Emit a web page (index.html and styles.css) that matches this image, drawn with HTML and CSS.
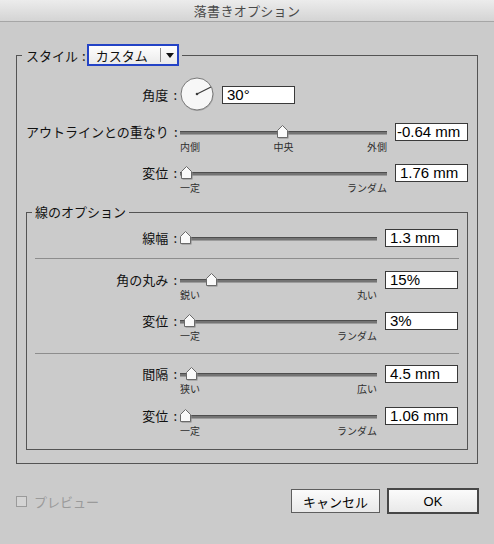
FILE: index.html
```html
<!DOCTYPE html>
<html lang="ja">
<head>
<meta charset="utf-8">
<title>落書きオプション</title>
<link rel="stylesheet" href="styles.css">
</head>
<body>
<div class="window">
  <div class="titlebar">落書きオプション</div>
  <div class="content">
    <div class="group outer">
      <div class="legend outer-legend">
        <span class="legend-text">スタイル<span class="colon">:</span></span>
        <div class="select">
          <span class="sel-text">カスタム</span>
          <span class="sel-sep"></span>
          <span class="sel-arrow"></span>
        </div>
      </div>

      <div class="dial-row">
        <div class="label">角度<span class="colon">:</span></div>
        <div class="dial-wrap">
          <svg class="dial" width="35" height="35" viewBox="0 0 35 35">
            <circle cx="17.5" cy="18" r="16" fill="#a9a9a9"/>
            <circle cx="17" cy="17" r="16" fill="#f7f7f7" stroke="#787878" stroke-width="1"/>
            <line x1="17" y1="17" x2="31" y2="10" stroke="#3c3c3c" stroke-width="1.2"/>
            <circle cx="17" cy="17" r="1.3" fill="#3c3c3c"/>
          </svg>
          <div class="field">30°</div>
        </div>
      </div>

      <div class="row orow r-outline">
        <div class="label">アウトラインとの重なり<span class="colon">:</span></div>
        <div class="slider oslider">
          <div class="track"></div>
          <svg class="thumb" style="left:97px" width="13" height="14" viewBox="0 0 13 14"><path d="M1.5 6.5 L6.5 1.5 L11.5 6.5 V13.5 H1.5Z" fill="#8a8a8a"/><path d="M0.5 5.5 L5.5 0.5 L10.5 5.5 V12.5 H0.5Z" fill="#fafafa" stroke="#6a6a6a"/></svg>
        </div>
        <div class="field tight">-0.64 mm</div>
      </div>
      <div class="row orow sub-row">
        <div></div>
        <div class="sub osub"><span>内側</span><span>中央</span><span>外側</span></div>
      </div>

      <div class="row orow r-gap">
        <div class="label">変位<span class="colon">:</span></div>
        <div class="slider oslider">
          <div class="track"></div>
          <svg class="thumb" style="left:1px" width="13" height="14" viewBox="0 0 13 14"><path d="M1.5 6.5 L6.5 1.5 L11.5 6.5 V13.5 H1.5Z" fill="#8a8a8a"/><path d="M0.5 5.5 L5.5 0.5 L10.5 5.5 V12.5 H0.5Z" fill="#fafafa" stroke="#6a6a6a"/></svg>
        </div>
        <div class="field">1.76 mm</div>
      </div>
      <div class="row orow sub-row">
        <div></div>
        <div class="sub osub"><span>一定</span><span>ランダム</span></div>
      </div>

      <div class="group inner">
        <div class="legend inner-legend">線のオプション</div>

        <div class="row irow r-first">
          <div class="label">線幅<span class="colon">:</span></div>
          <div class="slider islider">
            <div class="track"></div>
            <svg class="thumb" style="left:0px" width="13" height="14" viewBox="0 0 13 14"><path d="M1.5 6.5 L6.5 1.5 L11.5 6.5 V13.5 H1.5Z" fill="#8a8a8a"/><path d="M0.5 5.5 L5.5 0.5 L10.5 5.5 V12.5 H0.5Z" fill="#fafafa" stroke="#6a6a6a"/></svg>
          </div>
          <div class="field">1.3 mm</div>
        </div>

        <div class="sep"></div>

        <div class="row irow r-after-sep">
          <div class="label">角の丸み<span class="colon">:</span></div>
          <div class="slider islider">
            <div class="track"></div>
            <svg class="thumb" style="left:26px" width="13" height="14" viewBox="0 0 13 14"><path d="M1.5 6.5 L6.5 1.5 L11.5 6.5 V13.5 H1.5Z" fill="#8a8a8a"/><path d="M0.5 5.5 L5.5 0.5 L10.5 5.5 V12.5 H0.5Z" fill="#fafafa" stroke="#6a6a6a"/></svg>
          </div>
          <div class="field">15%</div>
        </div>
        <div class="row irow sub-row">
          <div></div>
          <div class="sub isub"><span>鋭い</span><span>丸い</span></div>
        </div>

        <div class="row irow r-gap">
          <div class="label">変位<span class="colon">:</span></div>
          <div class="slider islider">
            <div class="track"></div>
            <svg class="thumb" style="left:4px" width="13" height="14" viewBox="0 0 13 14"><path d="M1.5 6.5 L6.5 1.5 L11.5 6.5 V13.5 H1.5Z" fill="#8a8a8a"/><path d="M0.5 5.5 L5.5 0.5 L10.5 5.5 V12.5 H0.5Z" fill="#fafafa" stroke="#6a6a6a"/></svg>
          </div>
          <div class="field">3%</div>
        </div>
        <div class="row irow sub-row">
          <div></div>
          <div class="sub isub"><span>一定</span><span>ランダム</span></div>
        </div>

        <div class="sep"></div>

        <div class="row irow r-gap">
          <div class="label">間隔<span class="colon">:</span></div>
          <div class="slider islider">
            <div class="track"></div>
            <svg class="thumb" style="left:6px" width="13" height="14" viewBox="0 0 13 14"><path d="M1.5 6.5 L6.5 1.5 L11.5 6.5 V13.5 H1.5Z" fill="#8a8a8a"/><path d="M0.5 5.5 L5.5 0.5 L10.5 5.5 V12.5 H0.5Z" fill="#fafafa" stroke="#6a6a6a"/></svg>
          </div>
          <div class="field">4.5 mm</div>
        </div>
        <div class="row irow sub-row">
          <div></div>
          <div class="sub isub"><span>狭い</span><span>広い</span></div>
        </div>

        <div class="row irow r-after-sep">
          <div class="label">変位<span class="colon">:</span></div>
          <div class="slider islider">
            <div class="track"></div>
            <svg class="thumb" style="left:0px" width="13" height="14" viewBox="0 0 13 14"><path d="M1.5 6.5 L6.5 1.5 L11.5 6.5 V13.5 H1.5Z" fill="#8a8a8a"/><path d="M0.5 5.5 L5.5 0.5 L10.5 5.5 V12.5 H0.5Z" fill="#fafafa" stroke="#6a6a6a"/></svg>
          </div>
          <div class="field">1.06 mm</div>
        </div>
        <div class="row irow sub-row">
          <div></div>
          <div class="sub isub"><span>一定</span><span>ランダム</span></div>
        </div>
      </div>
    </div>

    <div class="bottom">
      <div class="preview"><span class="checkbox"></span><span>プレビュー</span></div>
      <div class="btn cancel">キャンセル</div>
      <div class="btn ok">OK</div>
    </div>
  </div>
</div>
</body>
</html>
```

FILE: styles.css
```css
html, body {
  margin: 0;
  padding: 0;
  background: #cbcbcb;
}

body {
  font-family: "Noto Sans CJK JP", "Noto Sans", sans-serif;
  font-size: 13px;
  color: #111;
}

.window {
  width: 494px;
  height: 544px;
  overflow: hidden;
  background: #cbcbcb;
}

.titlebar {
  height: 21px;
  line-height: 21px;
  border-bottom: 1px solid #a6a6a6;
  background: linear-gradient(#ececec, #d4d4d4);
  text-align: center;
  color: #4a4a4a;
  font-size: 13px;
  letter-spacing: 0.3px;
}

.content {
  padding: 0 15px 0 16px;
}

.group {
  border: 1px solid #545454;
  box-sizing: border-box;
}

.outer {
  width: 462px;
  margin-top: 33px;
  padding: 0 9px 13px 9px;
}

.inner {
  width: 442px;
  margin-top: 18px;
  padding: 0 0 12px 0;
}

.legend {
  width: max-content;
  background: #cbcbcb;
}

.outer-legend {
  display: flex;
  align-items: center;
  height: 22px;
  margin: -12px 0 0 -4px;
  padding: 0 3px 0 4px;
  gap: 1px;
}

.outer-legend .colon {
  margin-left: 4px;
}

.inner-legend {
  height: 16px;
  line-height: 16px;
  margin: -9px 0 0 5px;
  padding: 0 3px;
}

.colon {
  margin-left: 5px;
}

.select {
  display: flex;
  align-items: center;
  width: 92px;
  height: 22px;
  box-sizing: border-box;
  border: 2px solid #2343c6;
  background: linear-gradient(#fefefe, #eaeaea);
  padding-left: 7px;
}

.sel-text {
  width: 64px;
}

.sel-sep {
  width: 1px;
  height: 14px;
  background: #8c8c8c;
}

.sel-arrow {
  width: 0;
  height: 0;
  margin-left: 5px;
  border-left: 4px solid transparent;
  border-right: 4px solid transparent;
  border-top: 5px solid #111;
}

.label {
  text-align: right;
  padding-right: 3px;
  line-height: 18px;
  white-space: nowrap;
}

.dial-row {
  display: grid;
  grid-template-columns: 154px auto;
  align-items: center;
  margin-top: 11px;
  height: 34px;
}

.dial-wrap {
  display: flex;
  align-items: center;
  gap: 7px;
}

.dial {
  display: block;
}

.row {
  display: grid;
  align-items: start;
}

.orow {
  grid-template-columns: 154px 215px 73px;
}

.irow {
  grid-template-columns: 153px 205px 73px;
}

.r-outline {
  margin-top: 12px;
}

.r-gap {
  margin-top: 11px;
}

.r-first {
  margin-top: 9px;
}

.r-after-sep {
  margin-top: 12px;
}

.field {
  width: 73px;
  height: 18px;
  box-sizing: border-box;
  border: 1px solid #3a3a3a;
  background: #fff;
  font-family: "Liberation Sans", Arial, sans-serif;
  font-size: 15px;
  line-height: 16px;
  padding-left: 4px;
  color: #000;
  white-space: nowrap;
  overflow: hidden;
}

.field.tight {
  padding-left: 1px;
}

.slider {
  position: relative;
  height: 18px;
  padding-top: 8px;
  box-sizing: border-box;
}

.oslider {
  width: 207px;
}

.islider {
  width: 197px;
}

.track {
  height: 4px;
  box-sizing: border-box;
  background: #747474;
  border-top: 1px solid #4e4e4e;
  border-bottom: 1px solid #9c9c9c;
}

.thumb {
  position: absolute;
  top: 2px;
  display: block;
}

.sub-row {
  height: 12px;
}

.sub {
  display: flex;
  justify-content: space-between;
  font-size: 10px;
  line-height: 12px;
  color: #2e2e2e;
}

.osub {
  width: 207px;
}

.isub {
  width: 197px;
}

.sep {
  height: 1px;
  margin: 11px 8px 0 8px;
  background: #8d8d8d;
}

.bottom {
  display: flex;
  align-items: center;
  margin-top: 24px;
  height: 26px;
}

.preview {
  display: flex;
  align-items: center;
  gap: 7px;
  color: #9a9a9a;
}

.checkbox {
  width: 11px;
  height: 11px;
  box-sizing: border-box;
  border: 1px solid #9a9a9a;
  background: #d4d4d4;
}

.btn {
  display: flex;
  align-items: center;
  justify-content: center;
  box-sizing: border-box;
  background: linear-gradient(#fbfbfb, #e9e9e9);
  color: #000;
}

.cancel {
  margin-left: auto;
  width: 89px;
  height: 24px;
  border: 1px solid #5e5e5e;
}

.ok {
  margin-left: 7px;
  width: 92px;
  height: 26px;
  border: 2px solid #474747;
  font-family: "Liberation Sans", Arial, sans-serif;
  font-size: 13px;
}
```
